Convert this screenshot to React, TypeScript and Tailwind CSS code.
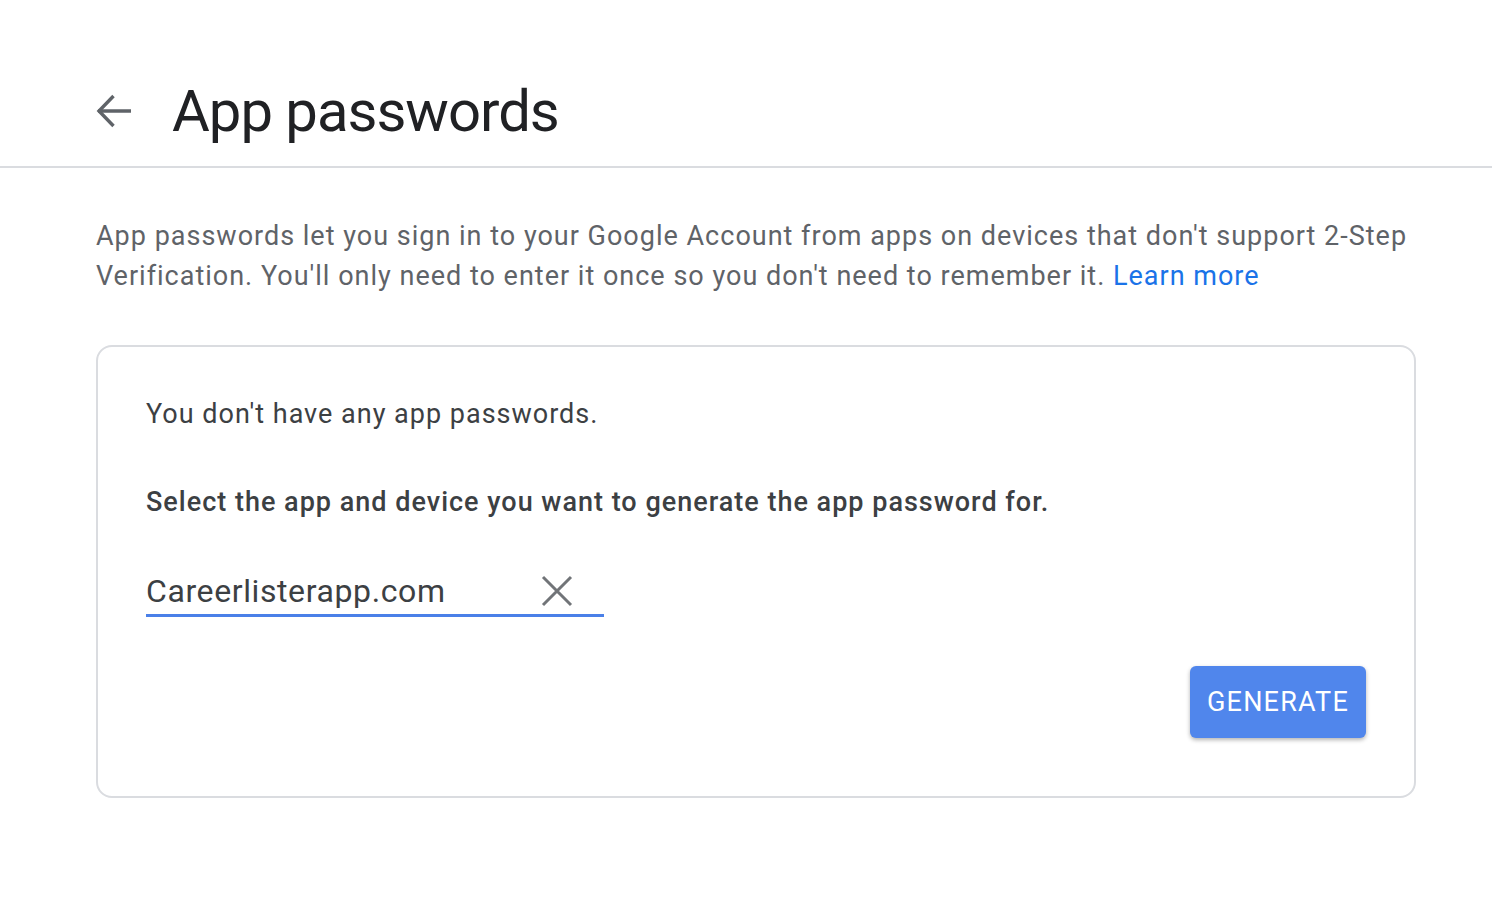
import React from 'react'

function BackArrow() {
  return (
    <svg width="36" height="36" viewBox="0 0 36 36" fill="none" stroke="#5f6368" strokeWidth="3.4" strokeLinecap="butt">
      <path d="M2 18h33" />
      <path d="M17.5 3 3 18l14.5 15" />
    </svg>
  )
}

function ClearIcon() {
  return (
    <svg width="32" height="32" viewBox="0 0 32 32" fill="none" stroke="#717478" strokeWidth="3">
      <path d="M2 2l28 28M30 2 2 30" />
    </svg>
  )
}

export default function App() {
  return (
    <div className="min-h-screen w-[1492px] bg-white font-['Roboto','Liberation_Sans',sans-serif]">
      <header className="flex items-center h-[168px] border-b-2 border-[#dadce0] pl-[96px] pt-[56px]">
        <BackArrow />
        <h1 className="ml-[40px] text-[58px] leading-none text-[#202124] tracking-[-1px]">
          App passwords
        </h1>
      </header>

      <main className="px-[96px] pt-[48px]">
        <p className="text-[27px] leading-[40px] text-[#5f6368] tracking-[1px] w-[1330px]">
          App passwords let you sign in to your Google Account from apps on devices that don't support 2-Step
          Verification. You'll only need to enter it once so you don't need to remember it.{' '}
          <span className="text-[#1a73e8]">Learn more</span>
        </p>

        <section className="mt-[49px] w-[1320px] h-[453px] rounded-[16px] border-2 border-[#dadce0] px-[48px] pt-[47px]">
          <p className="text-[27px] leading-[40px] text-[#3c4043] tracking-[1px]">
            You don't have any app passwords.
          </p>
          <p className="mt-[48px] text-[27px] leading-[40px] font-medium text-[#3c4043] tracking-[1px]">
            Select the app and device you want to generate the app password for.
          </p>

          <div className="mt-[49px] w-[458px] flex items-center justify-between border-b-[3px] border-[#4a80e8] pb-[3px]">
            <span className="text-[32px] leading-[40px] text-[#3c4043] tracking-[0.6px]">Careerlisterapp.com</span>
            <span className="mr-[31px] flex">
              <ClearIcon />
            </span>
          </div>

          <div className="flex justify-end mt-[49px]">
            <button className="w-[176px] h-[72px] rounded-[6px] bg-[#5086ec] text-white text-[27px] tracking-[1.2px] shadow-[0_2px_4px_rgba(0,0,0,0.3)]">
              GENERATE
            </button>
          </div>
        </section>
      </main>
    </div>
  )
}
